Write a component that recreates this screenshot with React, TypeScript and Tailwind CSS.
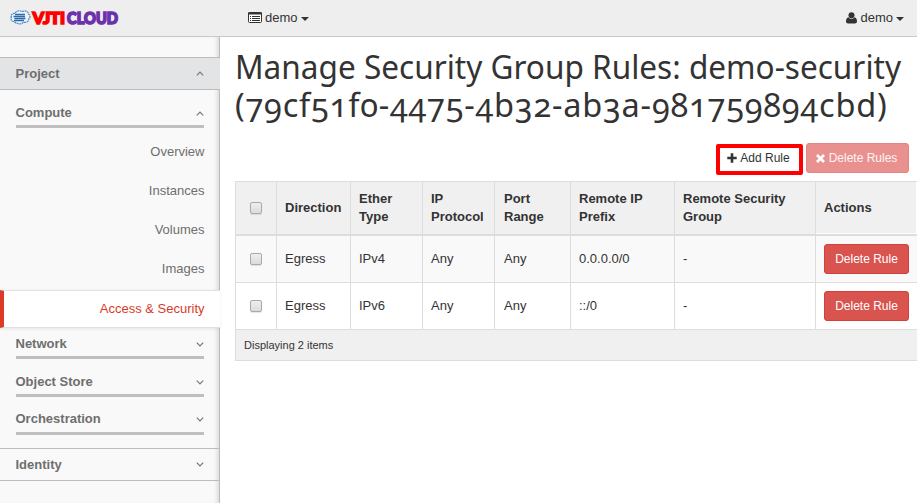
import React from "react";

const Caret = () => (
  <span className="ml-[3px] mt-[2px] inline-block border-x-4 border-t-4 border-x-transparent border-t-[#333]" />
);

const Chevron = ({ up = false }: { up?: boolean }) => (
  <svg width="8" height="5" viewBox="0 0 8 5" fill="none" stroke="#777" strokeWidth="1.2">
    <path d={up ? "M0.8 4.3 4 1l3.2 3.3" : "M0.8 0.7 4 4 7.2 0.7"} />
  </svg>
);

const Check = () => (
  <span className="mx-auto block h-3 w-3 rounded-[2px] border border-[#a9a9a9] bg-linear-to-b from-[#eeeeee] to-[#dcdcdc] shadow-[0_1px_1px_rgba(0,0,0,0.1)]" />
);

const Logo = () => (
  <svg width="118" height="30" viewBox="0 -5 118 30">
    <path
      d="M4 13.5C1.500 13.500 0.300 11.500 1.400 9.500 0.300 7 2.500 5 5 5.500 6.500 2.500 10 2 12 3.700 15 2 18.500 3.500 18.500 6 20.500 7 20.500 10 18.800 11 18.500 14 15.500 15 13.500 14.200 11.500 16.500 8 16.300 6.800 14.700 5.500 15 4.500 14.500 4 13.500Z"
      fill="#eef4fa" stroke="#4a86bf" strokeWidth="1.200" strokeDasharray="2 0.600"
    />
    <path d="M5 6.500h10M3.500 8.500h11.500M4.500 10.500h11M4 12.500h10" stroke="#2d6cab" strokeWidth="1.400" />
    <g fontFamily="Lato, sans-serif" fontWeight="900" fontSize="16.5" strokeWidth="1.700" strokeLinejoin="miter">
      <text x="22.500" y="15.500" textLength="32.500" lengthAdjust="spacingAndGlyphs" fill="#ff0000" stroke="#ff0000">VJTI</text>
      <text x="57" y="15.500" textLength="51" lengthAdjust="spacingAndGlyphs" fill="#7030a0" stroke="#6b33ad">CLOUD</text>
    </g>
  </svg>
);

const Panel = ({ name, up = false, className }: { name: string; up?: boolean; className: string }) => (
  <div className={`ml-4 mr-[15px] flex justify-between border-b-[3px] border-[#bfbfbf] font-bold ${className}`}>
    <span className="-ml-[0.5px] leading-[18px]">{name}</span>
    <span className="flex h-[18px] items-center"><Chevron up={up} /></span>
  </div>
);

const heads: [string, string?][] = [
  ["Direction"], ["Ether", "Type"], ["IP", "Protocol"], ["Port", "Range"],
  ["Remote IP", "Prefix"], ["Remote Security", "Group"],
];
const rows = [
  ["Egress", "IPv4", "Any", "Any", "0.0.0.0/0", "-"],
  ["Egress", "IPv6", "Any", "Any", "::/0", "-"],
];

export default function App() {
  return (
    <div className="h-[503px] w-[917px] overflow-hidden bg-white font-['Liberation_Sans',Arial,sans-serif] text-[13px] text-[#333]">
      <header className="flex h-[37px] items-center border-b border-[#c8c8c8] bg-[#eeeeee]">
        <div className="w-[248px] pl-[10px]"><Logo /></div>
        <div className="flex flex-1 items-center pb-px">
          <svg width="14" height="11" viewBox="0 0 14 11" className="mr-[3px]">
            <rect x="0.500" y="0.500" width="13" height="10" rx="1" fill="#fff" stroke="#333" />
            <path d="M0 1.500h14" stroke="#333" strokeWidth="2" />
            <path d="M2 4.500h1M4 4.500h8M2 6.500h1M4 6.500h8M2 8.500h1M4 8.500h8" stroke="#333" />
          </svg>
          demo<Caret />
        </div>
        <div className="flex items-center pb-px pr-[13px]">
          <svg width="11" height="12" viewBox="0 0 11 12" className="mr-[3px]" fill="#333">
            <circle cx="5.500" cy="3.200" r="3" />
            <path d="M2.500 5.200C0.700 5.500 0 7.300 0 9.300 0 10.700 0.900 11.500 2.200 11.500h6.600C10.100 11.500 11 10.700 11 9.300 11 7.300 10.300 5.500 8.500 5.200 7.600 6.300 6.600 6.700 5.500 6.700S3.400 6.300 2.500 5.200Z" />
          </svg>
          demo<Caret />
        </div>
      </header>
      <div className="flex h-[466px]">
        <nav className="h-full w-[220px] shrink-0 border-r border-[#bcbcbc] bg-[#f9f9f9] pt-5 text-[#6e6e6e] shadow-[inset_-4px_0_4px_-2px_rgba(0,0,0,0.12)]">
          <div className="-mr-px flex h-[33px] items-center justify-between border-y border-[#bcbcbc] bg-[#e2e4e5] pl-[15.5px] pr-4 font-bold">
            Project<Chevron up />
          </div>
          <Panel name="Compute" up className="h-[38px] pt-[14px]" />
          <div className="h-[162px] pr-[14.5px] pt-[4px] text-right">
            {["Overview", "Instances", "Volumes", "Images"].map((t) => (
              <div key={t} className="h-[39px] leading-[39px]">{t}</div>
            ))}
          </div>
          <div className="-mr-px h-[38px] border-y border-l-4 border-y-[#e0e0e0] border-l-[#dd3b26] bg-white pr-[15.5px] text-right leading-[35px] text-[#d93a29] shadow-[0_1px_3px_rgba(0,0,0,0.08)]">
            Access &amp; Security
          </div>
          <Panel name="Network" className="h-[31px] pt-[7px]" />
          <Panel name="Object Store" className="h-[38px] pt-[14px]" />
          <Panel name="Orchestration" className="h-[38px] pt-[13px]" />
          <div className="-mr-px mt-[13px] flex h-[33px] items-center justify-between border-y border-[#bcbcbc] pl-[15.5px] pr-4 font-bold">
            Identity<Chevron />
          </div>
        </nav>
        <main className="w-[697px] pl-[15px]">
          <h1 className="h-[106px] whitespace-nowrap pt-[11px] font-['Noto_Sans',sans-serif] text-[33px] font-normal leading-[38px] oldstyle-nums">
            <span className="block w-max origin-left scale-x-[0.956]">Manage Security Group Rules: demo-security</span>
            <span className="block w-max origin-left scale-x-[0.985] tracking-[0.8px]">(79cf51f0-4475-4b32-ab3a-981759894cbd)</span>
          </h1>
          <div className="flex h-[38px] items-start justify-end gap-[3px] pr-2 text-xs">
            <button className="mt-px flex h-[31px] w-[87px] items-center justify-center gap-[3px] rounded-[2px] border-4 border-[#ff0000] bg-white pb-[3px] pr-[2px]">
              <svg width="10" height="10" viewBox="0 0 10 10"><path d="M5 0.300v9.400M0.300 5h9.400" stroke="#333" strokeWidth="2.600" /></svg>
              Add Rule
            </button>
            <button className="flex h-[30px] w-[103px] items-center justify-center gap-1 rounded-[3px] border border-[#e38583] bg-[#e8918f] pr-[2px] text-white/90">
              <svg width="9" height="9" viewBox="0 0 9 9"><path d="M1 1l7 7M8 1L1 8" stroke="#fff" strokeWidth="2.700" /></svg>
              Delete Rules
            </button>
          </div>
          <table className="w-[682px] table-fixed border-separate border-spacing-0 border-t border-[#ddd] text-left">
            <colgroup>
              <col className="w-[41px]" /><col className="w-[74px]" /><col className="w-[72px]" /><col className="w-[72px]" />
              <col className="w-[76px]" /><col className="w-[104px]" /><col className="w-[141px]" /><col className="w-[102px]" />
            </colgroup>
            <thead>
              <tr className="h-[54px] bg-[#f0f0f0] leading-[18px]">
                <th className="border-b-2 border-l border-[#ddd] p-0"><Check /></th>
                {heads.map(([a, b], i) => (
                  <th key={a} className={`border-b-2 border-l border-[#ddd] py-0 pr-0 ${i === 3 ? "pl-[9px]" : "pl-2"}`}>
                    {a}{b && <><br />{b}</>}
                  </th>
                ))}
                <th className="border-b-2 border-l border-[#ddd] py-0 pl-2 shadow-[inset_-1px_-1px_0_#fff]">Actions</th>
              </tr>
            </thead>
            <tbody>
              {rows.map((r, i) => (
                <tr key={i} className="h-[47px] odd:bg-[#f9f9f9]">
                  <td className="border-b border-l border-[#ddd] p-0"><Check /></td>
                  {r.map((c, j) => (
                    <td key={j} className={`border-b border-l border-[#ddd] py-0 ${j === 3 ? "pl-[9px]" : "pl-2"}`}>{c}</td>
                  ))}
                  <td className="border-b border-l border-[#ddd] py-0 pl-2">
                    <button className="block h-[30px] w-[85px] rounded-[3px] border border-[#d43f3a] bg-[#d9534f] text-xs text-white">Delete Rule</button>
                  </td>
                </tr>
              ))}
            </tbody>
            <tfoot>
              <tr className="h-[31px] bg-[#f0f0f0] text-[11px]">
                <td colSpan={8} className="border-b border-l border-[#ddd] py-0 pl-2">Displaying 2 items</td>
              </tr>
            </tfoot>
          </table>
        </main>
      </div>
    </div>
  );
}
